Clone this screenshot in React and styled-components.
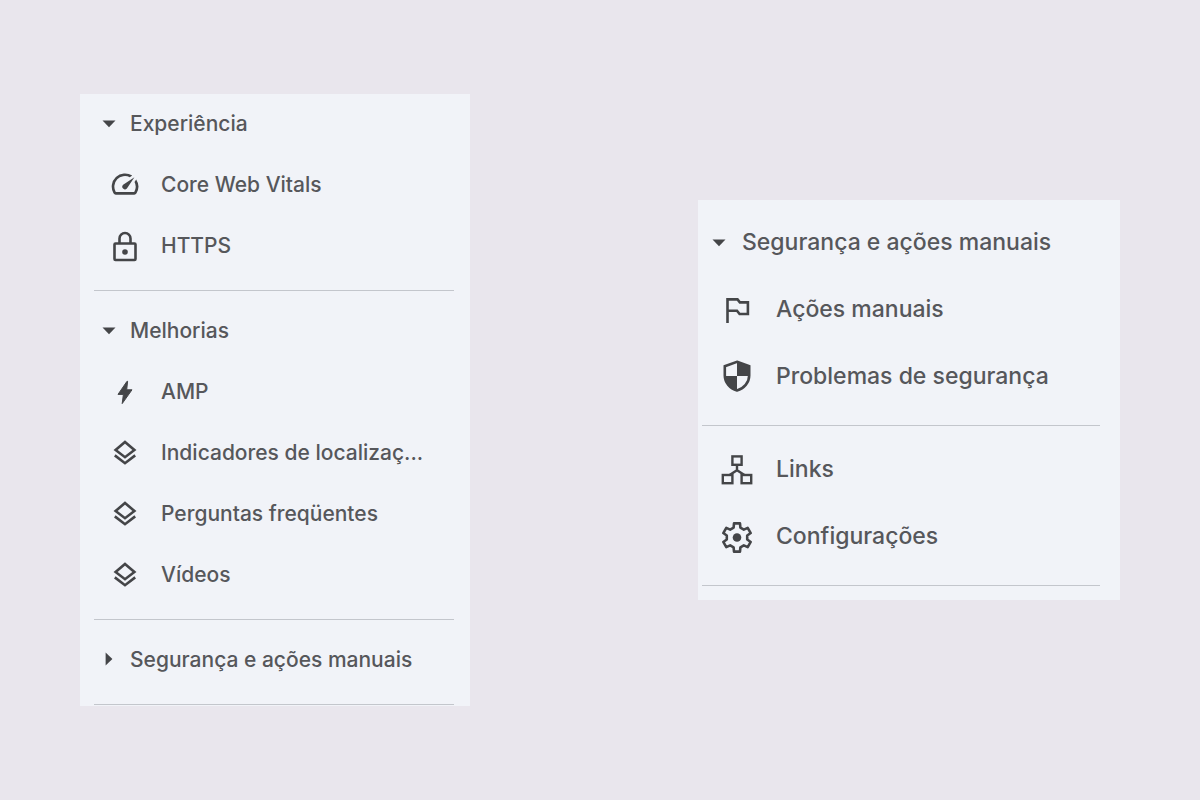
import React, { useState } from "react";
import styled, { createGlobalStyle } from "styled-components";
import { MdSpeed } from "react-icons/md";

const LockIcon = () => (
  <Icon>
    <path d="M10.5 14V9.5a5.5 5.5 0 0 1 11 0V14" />
    <rect x="5.5" y="14.5" width="21" height="16.5" rx="1" />
    <circle cx="16" cy="23" r="2.8" fill="currentColor" stroke="none" />
  </Icon>
);

const BoltIcon = () => (
  <Icon>
    <path
      d="M18 6.3 9 19.4h5.4L13.2 28.6 23 14.8h-5.3l.9-8.5z"
      fill="currentColor"
      strokeWidth="1"
    />
  </Icon>
);

const LayersIcon = () => (
  <Icon>
    <path d="M16 6l9.4 8L16 21.2 6.6 14z" />
    <path d="M5.8 19.4 16 27.2l10.2-7.8" />
  </Icon>
);

const FlagIcon = () => (
  <Icon>
    <path d="M6.5 30V6.4h10l2.4 3h8V21h-8.3L16 17.8H6.5" />
  </Icon>
);

const ShieldIcon = () => (
  <Icon>
    <path d="M16 1.8 28.2 6.2v9.3c0 7-5.2 13.1-12.2 15-7-1.9-12.2-8-12.2-15V6.2z" />
    <path
      d="M16 1.8 28.2 6.2V16H16zM16 16v14.5C9.4 28.6 4.2 23 3.8 16z"
      fill="currentColor"
      stroke="none"
    />
  </Icon>
);

const LinksIcon = () => (
  <Icon>
    <g strokeWidth="2.4">
      <rect x="11.4" y="3.4" width="9.2" height="8.4" />
      <rect x="1.8" y="22" width="9.6" height="8.2" />
      <rect x="20.6" y="22" width="9.6" height="8.2" />
      <path d="M16 11.8v5.4M8.6 22l7.4-4.8 7.4 4.8" />
    </g>
  </Icon>
);

// six teeth, each one given by its two base and two tip corners
const gearPoints = [0, 60, 120, 180, 240, 300]
  .flatMap((tooth) =>
    [
      [10.4, -19],
      [14.4, -12],
      [14.4, 12],
      [10.4, 19],
    ].map(([radius, offset]) => {
      const angle = ((tooth + offset) * Math.PI) / 180;
      const x = 16 + radius * Math.sin(angle);
      const y = 17.5 - radius * Math.cos(angle);
      return `${x.toFixed(2)},${y.toFixed(2)}`;
    })
  )
  .join(" ");

const GearIcon = () => (
  <Icon>
    <polygon points={gearPoints} strokeLinejoin="round" />
    <circle cx="16" cy="17.5" r="4.3" fill="currentColor" stroke="none" />
  </Icon>
);

const experience = [
  { label: "Core Web Vitals", icon: <MdSpeed size={32} /> },
  { label: "HTTPS", icon: <LockIcon /> },
];

const improvements = [
  { label: "AMP", icon: <BoltIcon /> },
  { label: "Indicadores de localizaç...", icon: <LayersIcon /> },
  { label: "Perguntas freqüentes", icon: <LayersIcon /> },
  { label: "Vídeos", icon: <LayersIcon /> },
];

const security = [
  { label: "Ações manuais", icon: <FlagIcon /> },
  { label: "Problemas de segurança", icon: <ShieldIcon /> },
];

const general = [
  { label: "Links", icon: <LinksIcon /> },
  { label: "Configurações", icon: <GearIcon /> },
];

const Section = ({ title, items, defaultOpen = true }) => {
  const [open, setOpen] = useState(defaultOpen);

  return (
    <Group>
      {title && (
        <Toggle type="button" aria-expanded={open} onClick={() => setOpen(!open)}>
          <Arrow viewBox="0 0 14 14" aria-hidden="true">
            <path d={open ? "M.5 4.5h13L7 11.3z" : "M3.6.5v13L10.4 7z"} />
          </Arrow>
          {title}
        </Toggle>
      )}
      {open &&
        items.map((item) => (
          <Item key={item.label} href="#">
            {item.icon}
            <span>{item.label}</span>
          </Item>
        ))}
    </Group>
  );
};

const App = () => {
  return (
    <>
      <GlobalStyle />
      <Page>
        <Card aria-label="Experiência e melhorias">
          <Section title="Experiência" items={experience} />
          <Section title="Melhorias" items={improvements} />
          <Section
            title="Segurança e ações manuais"
            items={security}
            defaultOpen={false}
          />
        </Card>
        <Card $large aria-label="Segurança e configurações">
          <Section title="Segurança e ações manuais" items={security} />
          <Section items={general} />
        </Card>
      </Page>
    </>
  );
};

export default App;

const GlobalStyle = createGlobalStyle`
  * {
    box-sizing: border-box;
  }

  body {
    margin: 0;
    background: #e9e6ed;
    color: #56575b;
    font-family: Inter, "Open Sans", sans-serif;
  }
`;

const Page = styled.main`
  min-height: 100vh;
  padding: 24px 80px;
  display: flex;
  align-items: center;
  justify-content: space-between;
  gap: 24px;
`;

const Group = styled.section`
  display: flex;
  flex-direction: column;
  border-bottom: 1px solid #c3c6cc;
`;

const Toggle = styled.button`
  height: 30px;
  padding: 0 0 0 8px;
  display: flex;
  align-items: center;
  gap: 14px;
  border: 0;
  background: none;
  color: inherit;
  font: inherit;
  font-weight: 500;
  white-space: nowrap;
  cursor: pointer;
`;

const Arrow = styled.svg`
  flex: none;
  width: 14px;
  height: 14px;
  fill: #444548;
`;

const Item = styled.a`
  height: 30px;
  padding-left: 15px;
  display: flex;
  align-items: center;
  gap: 20px;
  color: inherit;
  font-weight: 500;
  text-decoration: none;
  white-space: nowrap;

  svg {
    flex: none;
    color: #444548;
  }
`;

const Card = styled.nav`
  flex: 0 1 ${({ $large }) => ($large ? "422px" : "390px")};
  min-width: 0;
  padding: ${({ $large }) => ($large ? "27px 20px 14px 4px" : "14px 16px 1px 14px")};
  background: #f1f3f8;
  font-size: ${({ $large }) => ($large ? "23px" : "21px")};

  ${Group} {
    gap: ${({ $large }) => ($large ? "37px" : "31px")};
    padding-bottom: ${({ $large }) => ($large ? "34px" : "30px")};
  }

  ${Group} + ${Group} {
    padding-top: ${({ $large }) => ($large ? "28px" : "24px")};
  }

  ${Toggle} {
    padding-left: ${({ $large }) => ($large ? "10px" : "8px")};
    gap: ${({ $large }) => ($large ? "16px" : "14px")};
  }

  ${Item} {
    padding-left: ${({ $large }) => ($large ? "19px" : "15px")};
    gap: ${({ $large }) => ($large ? "23px" : "20px")};
  }
`;

const Icon = styled.svg.attrs({ viewBox: "0 0 32 32", "aria-hidden": true })`
  width: 32px;
  height: 32px;
  overflow: visible;
  fill: none;
  stroke: currentColor;
  stroke-width: 2.6px;
`;
